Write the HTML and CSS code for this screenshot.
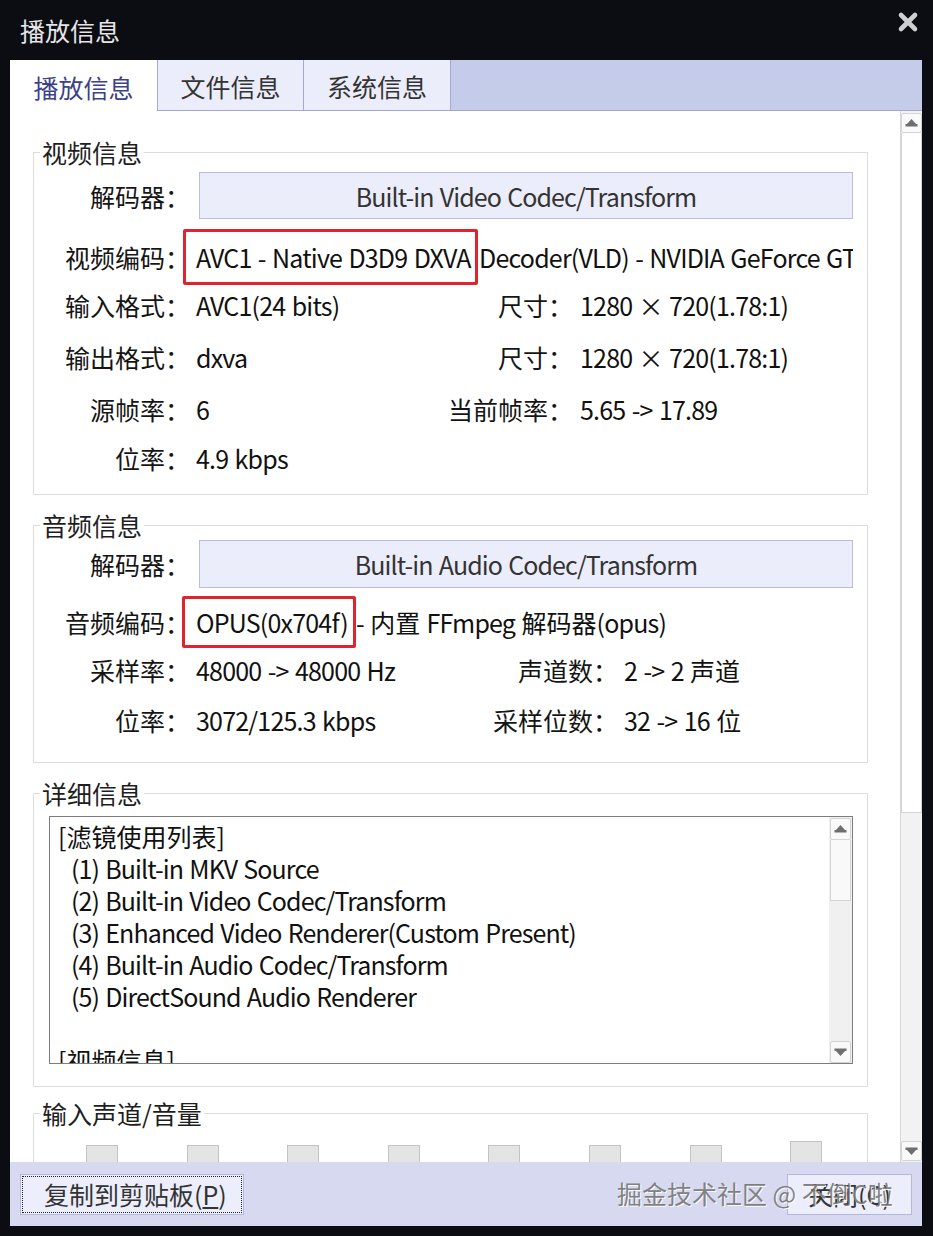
FILE: index.html
```html
<!DOCTYPE html>
<html lang="zh-CN">
<head>
<meta charset="utf-8">
<title>播放信息</title>
<link rel="stylesheet" href="styles.css">
</head>
<body>
<div class="window">
  <div class="titlebar">
    <span class="title">播放信息</span>
    <svg class="close-x" viewBox="0 0 22 22" aria-hidden="true">
      <path d="M4 4 L18 18 M18 4 L4 18" stroke="#cfcfd2" stroke-width="4.6" stroke-linecap="round"/>
    </svg>
  </div>
  <div class="frame">
    <div class="tabs">
      <div class="tab active">播放信息</div>
      <div class="tab">文件信息</div>
      <div class="tab last">系统信息</div>
      <div class="tab-fill"></div>
    </div>
    <div class="body">
      <div class="pane">
        <fieldset class="group video">
          <legend>视频信息</legend>
          <div class="row r-dec"><span class="lbl">解码器：</span><div class="field">Built-in Video Codec/Transform</div></div>
          <div class="row r-codec"><span class="lbl">视频编码：</span><div class="val span clip"><span class="mark mark-v">AVC1 - Native D3D9 DXVA</span> Decoder(VLD) - NVIDIA GeForce GTX 1050 Ti</div></div>
          <div class="row r-std"><span class="lbl">输入格式：</span><span class="val">AVC1(24 bits)</span><span class="lbl2">尺寸：</span><span class="val">1280 × 720(1.78:1)</span></div>
          <div class="row r-std"><span class="lbl">输出格式：</span><span class="val">dxva</span><span class="lbl2">尺寸：</span><span class="val">1280 × 720(1.78:1)</span></div>
          <div class="row r-std"><span class="lbl">源帧率：</span><span class="val">6</span><span class="lbl2">当前帧率：</span><span class="val">5.65 -&gt; 17.89</span></div>
          <div class="row r-last"><span class="lbl">位率：</span><span class="val">4.9 kbps</span></div>
        </fieldset>

        <fieldset class="group audio">
          <legend>音频信息</legend>
          <div class="row r-dec"><span class="lbl">解码器：</span><div class="field">Built-in Audio Codec/Transform</div></div>
          <div class="row a-codec"><span class="lbl">音频编码：</span><div class="val span clip"><span class="mark mark-a">OPUS(0x704f)</span> - <span class="cjk">内置</span> FFmpeg <span class="cjk">解码器</span>(opus)</div></div>
          <div class="row a-std"><span class="lbl">采样率：</span><span class="val">48000 -&gt; 48000 Hz</span><span class="lbl2">声道数：</span><span class="val">2 -&gt; 2 <span class="cjk">声道</span></span></div>
          <div class="row a-last"><span class="lbl">位率：</span><span class="val">3072/125.3 kbps</span><span class="lbl2">采样位数：</span><span class="val">32 -&gt; 16 <span class="cjk">位</span></span></div>
        </fieldset>

        <fieldset class="group details">
          <legend>详细信息</legend>
          <div class="detail-box">
            <div class="detail-text">
              <div class="dl">[滤镜使用列表]</div>
              <div class="dl item">(1) Built-in MKV Source</div>
              <div class="dl item">(2) Built-in Video Codec/Transform</div>
              <div class="dl item">(3) Enhanced Video Renderer(Custom Present)</div>
              <div class="dl item">(4) Built-in Audio Codec/Transform</div>
              <div class="dl item">(5) DirectSound Audio Renderer</div>
              <div class="dl">&nbsp;</div>
              <div class="dl">[视频信息]</div>
            </div>
            <div class="sb">
              <div class="sb-btn"><svg class="arr" viewBox="0 0 13 8"><path d="M6.5 0 L11 5 L2 5 Z" fill="#6e6e6e"/><rect x="0.5" y="5" width="12" height="2.5" fill="#6e6e6e"/></svg></div>
              <div class="sb-thumb"></div>
              <div class="sb-track"></div>
              <div class="sb-btn"><svg class="arr" viewBox="0 0 13 8"><rect x="0.5" y="0.5" width="12" height="2.5" fill="#6e6e6e"/><path d="M2 3 L11 3 L6.5 8 Z" fill="#6e6e6e"/></svg></div>
            </div>
          </div>
        </fieldset>

        <fieldset class="group volume">
          <legend>输入声道/音量</legend>
          <div class="meters">
            <div class="meter"></div><div class="meter"></div><div class="meter"></div><div class="meter"></div>
            <div class="meter"></div><div class="meter"></div><div class="meter"></div><div class="meter tall"></div>
          </div>
        </fieldset>
      </div>
      <div class="vscroll">
        <div class="sb-btn main"><svg class="arr" viewBox="0 0 13 8"><path d="M6.5 0 L11 5 L2 5 Z" fill="#6e6e6e"/><rect x="0.5" y="5" width="12" height="2.5" fill="#6e6e6e"/></svg></div>
        <div class="vthumb"></div>
        <div class="sb-track"></div>
        <div class="sb-btn main"><svg class="arr" viewBox="0 0 13 8"><rect x="0.5" y="0.5" width="12" height="2.5" fill="#6e6e6e"/><path d="M2 3 L11 3 L6.5 8 Z" fill="#6e6e6e"/></svg></div>
      </div>
    </div>
    <div class="bottombar">
      <div class="btn btn-copy">复制到剪贴板(<u>P</u>)</div>
      <div class="btn btn-close">关闭(C)</div>
    </div>
  </div>
  <div class="watermark">掘金技术社区 @ 不倒C啦</div>
</div>
</body>
</html>
```

FILE: styles.css
```css
* { box-sizing: border-box; }

body {
  margin: 0;
  width: 933px;
  height: 1236px;
  overflow: hidden;
  background: #0b0d12;
  font-family: "Noto Sans CJK SC", "Noto Sans", sans-serif;
  font-size: 25px;
  color: #151515;
}

.window {
  position: relative;
  height: 1236px;
  display: flex;
  flex-direction: column;
}

.titlebar {
  height: 60px;
  flex: none;
  display: flex;
  justify-content: space-between;
  align-items: center;
  padding: 0 14px 0 20px;
  color: #e6e6e8;
}

.title { line-height: 30px; }

.close-x {
  width: 22px;
  height: 22px;
  align-self: flex-start;
  margin-top: 11px;
}

.frame {
  flex: 1;
  min-height: 0;
  margin: 0 11px 10px 10px;
  display: flex;
  flex-direction: column;
  background: #fff;
}

.tabs {
  height: 51px;
  flex: none;
  display: flex;
  background: #c5cce9;
}

.tab {
  width: 146px;
  display: flex;
  align-items: center;
  justify-content: center;
  background: #ecedfa;
  color: #333;
  border-left: 1px solid #a3a8d6;
  border-bottom: 1px solid #a3a8d6;
  line-height: 30px;
  padding-top: 2px;
}

.tab.active {
  width: 147px;
  background: #fff;
  color: #3d4187;
  border: none;
}

.tab.last {
  width: 148px;
  border-right: 1px solid #a3a8d6;
}

.tab-fill {
  flex: 1;
  border-bottom: 1px solid #a3a8d6;
}

.body {
  flex: 1;
  min-height: 0;
  display: flex;
}

.pane {
  flex: 1;
  min-width: 0;
  overflow: hidden;
  padding: 26px 32px 0 23px;
}

.group {
  margin: 0;
  padding: 0;
  min-width: 0;
  border: 1px solid #dcdcdc;
}

.group legend {
  margin-left: 6px;
  padding: 0 2px;
  line-height: 30px;
  color: #1e1e1e;
}

.row {
  display: grid;
  align-items: center;
  white-space: nowrap;
  line-height: 30px;
}

.video .row { grid-template-columns: 162px 250px 134px 1fr; }
.audio .row { grid-template-columns: 162px 274px 154px 1fr; }

.lbl {
  text-align: right;
  padding-right: 6px;
}

.video .lbl2 { text-align: right; padding-right: 7px; }
.audio .lbl2 { text-align: right; padding-right: 6px; }

.val {
  color: #111;
  letter-spacing: -0.8px;
  word-spacing: 1.5px;
}

.cjk { letter-spacing: 0; }

.span {
  grid-column: 2 / -1;
  margin: 0 14px 0 -14px;
  padding-left: 14px;
}

.clip { overflow-x: clip; }

.field {
  grid-column: 2 / -1;
  margin: 0 14px 0 3px;
  height: 47px;
  background: #ecedfa;
  border: 1px solid #b9bde0;
  display: flex;
  align-items: center;
  justify-content: center;
  color: #333;
  letter-spacing: -0.9px;
  word-spacing: 1.5px;
}

.video { padding: 5px 0 13px; }
.video .r-codec { height: 45px; margin-top: 15px; }
.video .r-std { height: 52px; }
.video .r-last { height: 46px; }

.audio { margin-top: 15px; padding: 0 0 16px; }
.audio .field { height: 48px; }
.audio .a-codec { height: 48px; margin-top: 10px; }
.audio .a-std { height: 48px; }
.audio .a-last { height: 52px; }

.mark {
  display: inline-block;
  border: 3px solid #e0232c;
  border-radius: 2px;
  line-height: 30px;
}

.mark-v {
  padding: 10px 4px 10px 10px;
  margin: -13px -5px -13px -13px;
}

.mark-a {
  padding: 8px 5px 8px 11px;
  margin: -11px -6px -11px -14px;
}

.details { margin-top: 15px; padding: 8px 0 22px; }

.detail-box {
  height: 248px;
  margin: 0 14px 0 15px;
  border: 1px solid #7d7d7d;
  display: flex;
}

.detail-text {
  flex: 1;
  min-width: 0;
  overflow: hidden;
  padding: 3px 0 0 8px;
  line-height: 32px;
  white-space: nowrap;
  color: #111;
}

.dl.item {
  padding-left: 13px;
  letter-spacing: -0.9px;
  word-spacing: 1.5px;
}

.sb {
  width: 23px;
  display: flex;
  flex-direction: column;
  background: #f0f0f0;
  padding: 1px 1px 0;
}

.sb-btn {
  height: 22px;
  flex: none;
  display: flex;
  align-items: center;
  justify-content: center;
  background: #f9f9f9;
  border: 1px solid #d4d4d4;
  border-radius: 2px;
}

.arr { width: 13px; height: 8px; }

.sb-thumb {
  height: 61px;
  flex: none;
  background: #f9f9f9;
  border: 1px solid #d4d4d4;
  border-top: none;
}

.sb-track { flex: 1; }

.volume { margin-top: 11px; padding: 13px 0 0; }

.meters {
  display: flex;
  align-items: flex-end;
  gap: 68.6px;
  padding-left: 52px;
}

.meter {
  width: 32px;
  height: 30px;
  background: #e4e4e4;
  border: 1px solid #c3c3c3;
}

.meter.tall { height: 34px; }

.vscroll {
  width: 22px;
  flex: none;
  display: flex;
  flex-direction: column;
  background: #f2f2f2;
  border-left: 1px solid #d7d7d7;
  padding: 2px 0 1px;
}

.sb-btn.main { height: 20px; }

.vthumb {
  height: 680px;
  flex: none;
  background: #fff;
  border: 1px solid #d4d4d4;
  border-top: none;
}

.bottombar {
  height: 64px;
  flex: none;
  display: flex;
  align-items: center;
  justify-content: space-between;
  padding: 0 10px;
  background: #d6d9ef;
}

.btn {
  height: 41px;
  display: flex;
  align-items: center;
  background: #eceefb;
  border: 1px solid #b4b8de;
  color: #333;
  line-height: 30px;
}

.btn-copy {
  width: 224px;
  padding-left: 23px;
  outline: 1px dotted #222;
  outline-offset: -3px;
}

.btn-copy u { text-underline-offset: 2px; }

.btn-close {
  width: 125px;
  justify-content: center;
}

.watermark {
  position: absolute;
  left: 617px;
  top: 1178px;
  line-height: 30px;
  white-space: nowrap;
  color: rgba(110, 110, 110, 0.85);
  text-shadow: 1px 1px 0 rgba(255, 255, 255, 0.9);
}
```
